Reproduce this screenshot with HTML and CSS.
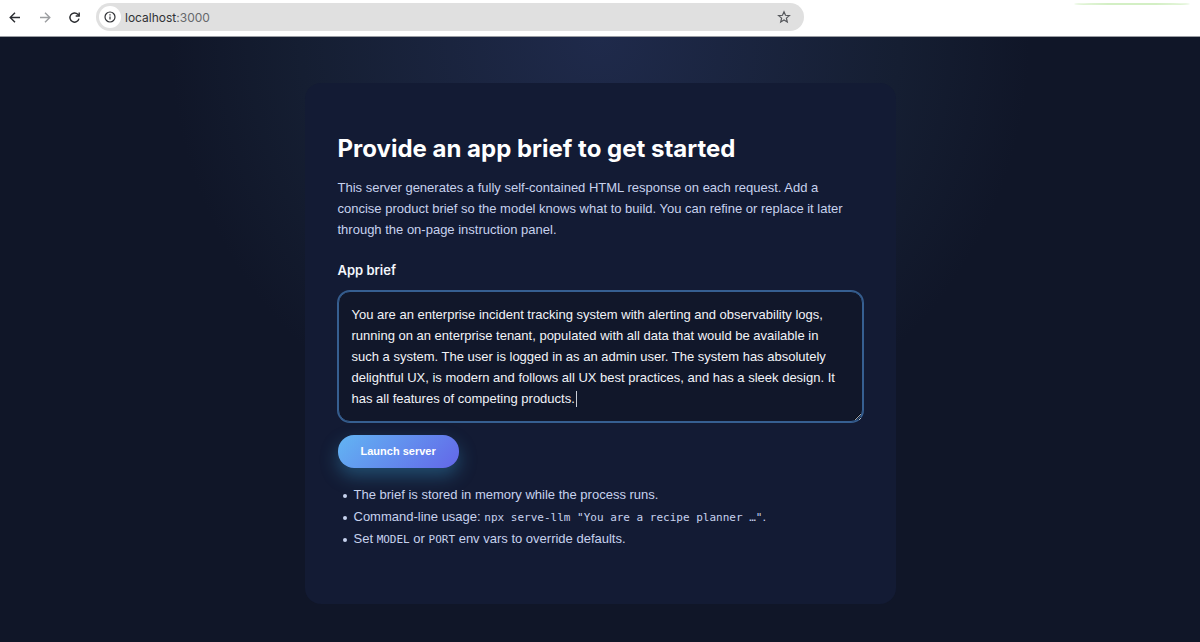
FILE: index.html
```html
<!DOCTYPE html>
<html lang="en">
<head>
<meta charset="utf-8">
<meta name="viewport" content="width=device-width, initial-scale=1">
<title>App brief</title>
<link rel="stylesheet" href="styles.css">
</head>
<body>
<header class="toolbar">
  <nav class="nav" aria-label="Browser navigation">
    <button class="icon-button" type="button" aria-label="Back">
      <svg class="icon" viewBox="0 0 16 16"><path d="M13 8.500H3.500M8 3.700 3.200 8.500 8 13.300"/></svg>
    </button>
    <button class="icon-button icon-button--off" type="button" aria-label="Forward">
      <svg class="icon" viewBox="0 0 16 16"><path d="M3 8.500h9.500M8 3.700 12.800 8.500 8 13.300"/></svg>
    </button>
    <button class="icon-button" type="button" aria-label="Reload">
      <svg class="icon" viewBox="0 0 16 16"><path d="M12 9.700A4.600 4.600 0 1 1 10.800 5.300L12 6.500"/><path d="M12.200 3.500V7H8.700"/></svg>
    </button>
  </nav>
  <div class="address">
    <button class="site-info" type="button" aria-label="Site information">
      <svg class="icon icon--thin" viewBox="0 0 16 16"><circle cx="8" cy="8" r="5"/><path d="M8 7.400v3.200M8 5.200v1.200"/></svg>
    </button>
    <span class="url">localhost<span class="port">:3000</span></span>
    <button class="icon-button icon-button--star" type="button" aria-label="Bookmark this page">
      <svg class="icon icon--thin" viewBox="0 0 16 16"><path d="M8 2.800 9.500 6.300 13.400 6.600 10.400 9.100 11.300 12.900 8 10.900 4.700 12.900 5.600 9.100 2.600 6.600 6.500 6.300Z"/></svg>
    </button>
  </div>
  <div class="tab-edge"></div>
</header>
<main class="page">
  <section class="card">
    <h1 class="title">Provide an app brief to get started</h1>
    <p class="intro">This server generates a fully self-contained HTML response on each request. Add a concise product brief so the model knows what to build. You can refine or replace it later through the on-page instruction panel.</p>
    <form class="form">
      <label class="label" for="brief">App brief</label>
      <div class="brief-field">
        <textarea class="brief" id="brief" rows="5" spellcheck="false">You are an enterprise incident tracking system with alerting and observability logs, running on an enterprise tenant, populated with all data that would be available in such a system. The user is logged in as an admin user. The system has absolutely delightful UX, is modern and follows all UX best practices, and has a sleek design. It has all features of competing products.</textarea>
        <span class="caret"></span>
      </div>
      <button class="launch" type="button">Launch server</button>
    </form>
    <ul class="notes">
      <li>The brief is stored in memory while the process runs.</li>
      <li>Command-line usage: <code>npx serve-llm "You are a recipe planner …"</code>.</li>
      <li>Set <code>MODEL</code> or <code>PORT</code> env vars to override defaults.</li>
    </ul>
  </section>
</main>
</body>
</html>
```
FILE: styles.css
```css
* {
  box-sizing: border-box;
}

body {
  margin: 0;
  min-height: 100vh;
  display: flex;
  flex-direction: column;
  font-family: "Liberation Sans", Arial, sans-serif;
  font-size: 13px;
  line-height: 21px;
  color: #c7d2ee;
  background: #101628;
}

button {
  border: 0;
  padding: 0;
  background: none;
  font: inherit;
  color: inherit;
}

.toolbar {
  display: flex;
  align-items: flex-start;
  padding: 3px 10px 5px 7px;
  border-bottom: 1px solid #9a9da3;
  background: #fff;
  color: #303236;
}

.nav {
  display: flex;
  gap: 14px;
  padding: 6px 13px 0 0;
}

.icon-button {
  display: flex;
  color: #2a2c30;
}

.icon-button--off {
  color: #9c9ea1;
}

.icon-button--star {
  margin-left: auto;
  color: #55575b;
}

.icon {
  width: 16px;
  height: 16px;
  fill: none;
  stroke: currentColor;
  stroke-width: 1.4;
}

.icon--thin {
  stroke-width: 1.2;
}

.address {
  display: flex;
  align-items: center;
  flex: 0 1 708px;
  height: 28px;
  padding: 0 12px 0 3px;
  border-radius: 14px;
  background: #e0e0e0;
  font-family: Inter, "Liberation Sans", sans-serif;
  font-size: 12px;
}

.site-info {
  display: grid;
  place-items: center;
  width: 22px;
  height: 22px;
  margin-right: 4px;
  border-radius: 50%;
  background: #fff;
}

.port {
  color: #66686c;
}

.tab-edge {
  width: 116px;
  height: 2px;
  margin-left: auto;
  border-radius: 50%;
  background: #d3efc4;
}

.page {
  flex: 1;
  display: grid;
  justify-items: center;
  align-items: start;
  padding: 46px 24px 38px;
  background: radial-gradient(circle at 50% 0, #1f2a4b 0, #151e32 300px, #101628 430px);
}

.card {
  width: 100%;
  max-width: 591px;
  padding: 48px 33px 54px;
  border-radius: 16px;
  background: #131b34;
}

.title {
  margin: 0 0 10px;
  font-family: Inter, "Liberation Sans", sans-serif;
  font-size: 24px;
  line-height: 36px;
  font-weight: 700;
  color: #fff;
}

.intro {
  margin: 0 0 20px;
}

.form {
  display: flex;
  flex-direction: column;
  align-items: flex-start;
}

.label {
  margin-bottom: 10px;
  font-family: Inter, "Liberation Sans", sans-serif;
  font-weight: 600;
  color: #f4f6fc;
}

.brief-field {
  position: relative;
  width: 100%;
  margin-bottom: 13px;
}

.brief {
  display: block;
  width: 100%;
  padding: 12px 18px 12px 13px;
  border: 1px solid #365f91;
  border-radius: 12px;
  box-shadow: 0 0 0 1px #365f91;
  outline: none;
  resize: vertical;
  background: #11172a;
  font: inherit;
  color: #f1f3f8;
}

.caret {
  position: absolute;
  left: 238px;
  bottom: 15px;
  width: 1px;
  height: 16px;
  background: #c9ccd4;
}

.brief:focus + .caret {
  display: none;
}

.launch {
  padding: 6px 23px;
  border-radius: 16px;
  background: linear-gradient(135deg, #62b5f3, #6366e8);
  box-shadow: 0 8px 18px rgba(56, 152, 200, 0.4);
  font-size: 11px;
  font-weight: 700;
  color: #fff;
}

.notes {
  margin: 16px 0 0;
  padding-left: 5px;
  line-height: 22px;
  list-style: none;
}

.notes li::before {
  content: "";
  display: inline-block;
  width: 4px;
  height: 4px;
  margin-right: 7px;
  border-radius: 50%;
  vertical-align: middle;
  background: #c7d2ee;
}

.notes code {
  font-family: "DejaVu Sans Mono", monospace;
  font-size: 11px;
  line-height: 1;
}
```
